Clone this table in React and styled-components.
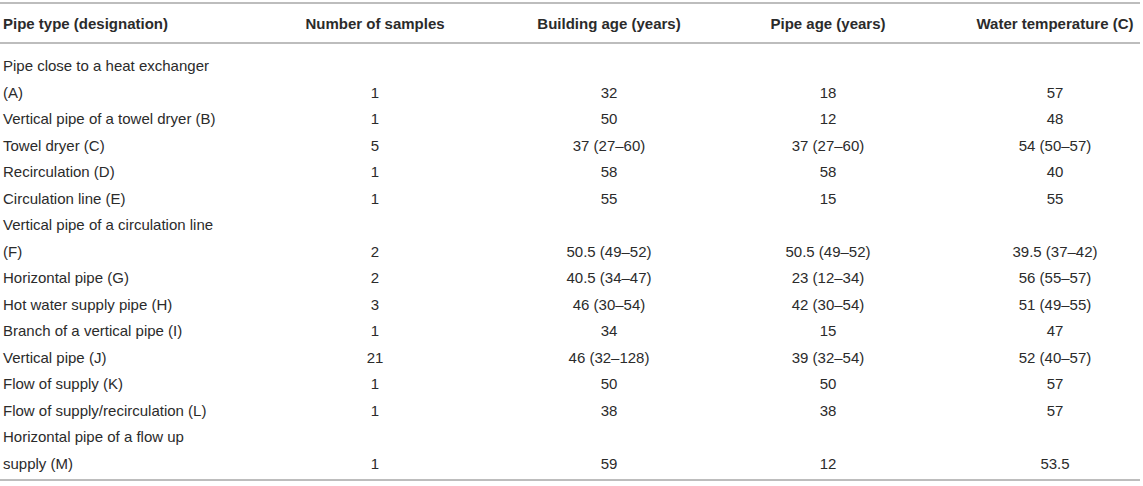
import React from "react";
import styled, { createGlobalStyle } from "styled-components";

const GlobalStyle = createGlobalStyle`
  html, body {
    margin: 0;
    padding: 0;
    background: #ffffff;
  }
  body {
    font-family: "Liberation Sans", Arial, sans-serif;
    color: #2b2b2b;
  }
`;

const Page = styled.div`
  width: 1143px;
  padding-top: 2px;
`;

const Table = styled.div`
  width: 1140px;
  border-top: 2px solid #bdbdbd;
  border-bottom: 2px solid #bdbdbd;
`;

const Row = styled.div`
  display: grid;
  grid-template-columns: 218px 314px 154px 284px 170px;
  align-items: end;
`;

const HeadRow = styled(Row)`
  height: 38px;
  align-items: center;
  border-bottom: 2px solid #bdbdbd;
`;

const Body = styled.div`
  padding: 9px 0 2px;
`;

const HeadCell = styled.div`
  font-size: 15px;
  font-weight: 700;
  white-space: nowrap;
  text-align: ${(p) => (p.left ? "left" : "center")};
  padding-left: ${(p) => (p.left ? "3px" : "0")};
`;

const Cell = styled.div`
  font-size: 15px;
  line-height: 26.5px;
  white-space: nowrap;
  text-align: ${(p) => (p.left ? "left" : "center")};
  padding-left: ${(p) => (p.left ? "3px" : "0")};
`;

const Line = styled.div``;

const headers = [
  "Pipe type (designation)",
  "Number of samples",
  "Building age (years)",
  "Pipe age (years)",
  "Water temperature (C)",
];

const rows = [
  [["Pipe close to a heat exchanger", "(A)"], "1", "32", "18", "57"],
  [["Vertical pipe of a towel dryer (B)"], "1", "50", "12", "48"],
  [["Towel dryer (C)"], "5", "37 (27–60)", "37 (27–60)", "54 (50–57)"],
  [["Recirculation (D)"], "1", "58", "58", "40"],
  [["Circulation line (E)"], "1", "55", "15", "55"],
  [["Vertical pipe of a circulation line", "(F)"], "2", "50.5 (49–52)", "50.5 (49–52)", "39.5 (37–42)"],
  [["Horizontal pipe (G)"], "2", "40.5 (34–47)", "23 (12–34)", "56 (55–57)"],
  [["Hot water supply pipe (H)"], "3", "46 (30–54)", "42 (30–54)", "51 (49–55)"],
  [["Branch of a vertical pipe (I)"], "1", "34", "15", "47"],
  [["Vertical pipe (J)"], "21", "46 (32–128)", "39 (32–54)", "52 (40–57)"],
  [["Flow of supply (K)"], "1", "50", "50", "57"],
  [["Flow of supply/recirculation (L)"], "1", "38", "38", "57"],
  [["Horizontal pipe of a flow up", "supply (M)"], "1", "59", "12", "53.5"],
];

const App = () => {
  return (
    <Page>
      <GlobalStyle />
      <Table>
        <HeadRow>
          {headers.map((h, i) => (
            <HeadCell key={h} left={i === 0}>
              {h}
            </HeadCell>
          ))}
        </HeadRow>
        <Body>
          {rows.map(([name, ...values]) => (
            <Row key={name.join(" ")}>
              <Cell left>
                {name.map((l) => (
                  <Line key={l}>{l}</Line>
                ))}
              </Cell>
              {values.map((v, i) => (
                <Cell key={i}>{v}</Cell>
              ))}
            </Row>
          ))}
        </Body>
      </Table>
    </Page>
  );
};

export default App;
